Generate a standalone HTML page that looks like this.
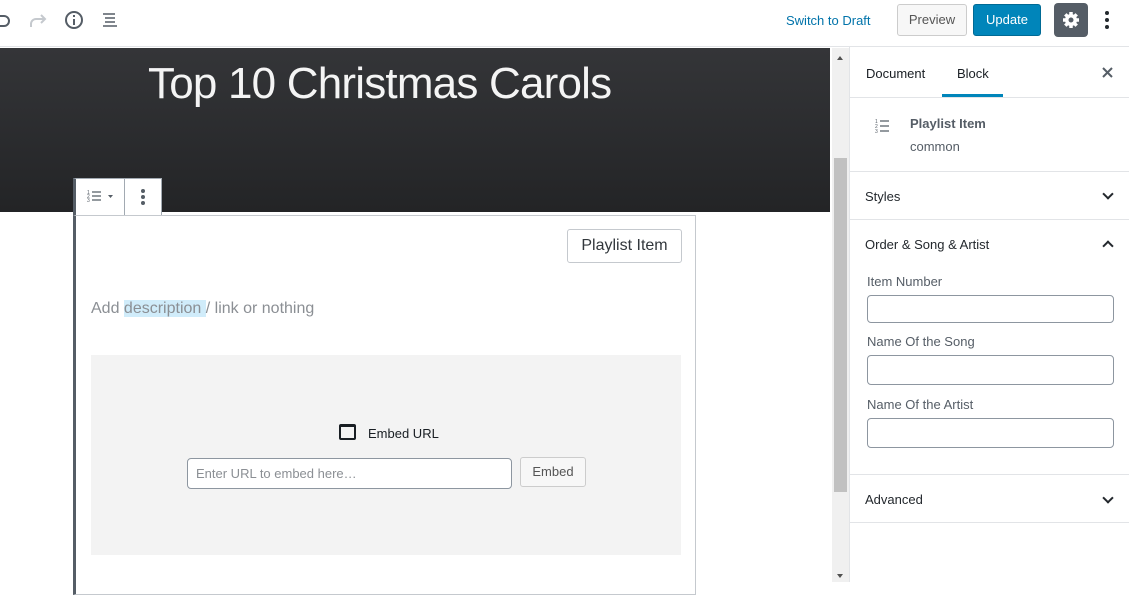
<!DOCTYPE html>
<html><head><meta charset="utf-8"><style>
*{box-sizing:border-box;margin:0;padding:0}
body{width:1129px;height:582px;overflow:hidden;background:#fff;font-family:"Liberation Sans",sans-serif;position:relative;color:#23282d}
.a{position:absolute}
.top{left:0;top:0;width:1129px;height:47px;border-bottom:1px solid #e2e4e7;background:#fff}
.btn{position:absolute;font-size:13px;border-radius:3px;text-align:center}
.side{left:849px;top:47px;width:280px;height:535px;border-left:1px solid #e2e4e7;background:#fff}
.sec{position:absolute;left:0;width:280px;border-bottom:1px solid #e2e4e7}
.lbl{position:absolute;left:17px;font-size:13px;color:#555d66}
.inp{position:absolute;left:17px;width:247px;height:28px;border:1px solid #8d96a0;border-radius:4px}
.chev{position:absolute;right:18px;width:8px;height:8px;border-right:2px solid #23282d;border-bottom:2px solid #23282d}
</style></head><body>
<div class="a top">
<svg class="a" style="left:0;top:10px" width="130" height="22" viewBox="0 0 130 22">
<path d="M0 6h4a5 5 0 0 1 0 10H0" fill="none" stroke="#555d66" stroke-width="2"/>
<path d="M44 9h-8a5 5 0 0 0-5 5v3" fill="none" stroke="#c5c9ce" stroke-width="2"/><path d="M41 5l4 4-4 4" fill="none" stroke="#c5c9ce" stroke-width="2"/>
<circle cx="74" cy="10" r="8" fill="none" stroke="#555d66" stroke-width="2"/><rect x="73" y="9" width="2" height="6" fill="#555d66"/><rect x="73" y="5" width="2" height="2" fill="#555d66"/>
<path d="M103 4h12M105 8h10M105 12h10M103 16h14" stroke="#555d66" stroke-width="1.5"/>
</svg>
<div class="a" style="left:786px;top:13px;font-size:13px;color:#0073aa">Switch to Draft</div>
<div class="btn" style="left:897px;top:4px;width:70px;height:32px;border:1px solid #ccc;background:#f7f7f7;color:#555;line-height:30px">Preview</div>
<div class="btn" style="left:973px;top:4px;width:68px;height:32px;background:#0085ba;border:1px solid #006a95;color:#fff;line-height:30px">Update</div>
<div class="btn" style="left:1054px;top:3px;width:34px;height:34px;background:#555d66;border-radius:4px"></div>
<svg class="a" style="left:1061px;top:10px" width="20" height="20" viewBox="0 0 20 20"><g fill="#fff"><circle cx="10" cy="10" r="6"/><g stroke="#fff" stroke-width="3.5"><path d="M10 2v16M2 10h16M4.3 4.3l11.4 11.4M15.7 4.3L4.3 15.7"/></g></g><circle cx="10" cy="10" r="2.5" fill="#555d66"/></svg>
<div class="a" style="left:1105px;top:11px;width:4px;height:4px;border-radius:2px;background:#23282d;box-shadow:0 7px 0 #23282d,0 14px 0 #23282d"></div>
</div>
<div class="a" style="left:0;top:48px;width:830px;height:164px;background:linear-gradient(#343538,#232426)"></div>
<div class="a" style="left:148px;top:59px;font-size:44px;color:#f4f4f4;letter-spacing:-0.8px">Top 10 Christmas Carols</div>
<div class="a" style="left:73px;top:178px;width:89px;height:37px;background:#fff;border:1px solid #a2aab2;border-left:3px solid #555d66;border-bottom:none"></div>
<div class="a" style="left:124px;top:178px;width:1px;height:37px;background:#a2aab2"></div>
<svg class="a" style="left:87px;top:188px" width="30" height="16" viewBox="0 0 30 16"><path d="M5 4h9M5 8h9M5 12h9" stroke="#555d66" stroke-width="1.2"/><text x="0" y="6" font-size="5" fill="#555d66">1</text><text x="0" y="10" font-size="5" fill="#555d66">2</text><text x="0" y="14" font-size="5" fill="#555d66">3</text><path d="M21 7h5l-2.5 3z" fill="#555d66"/></svg>
<div class="a" style="left:141px;top:189px;width:4px;height:4px;border-radius:2px;background:#555d66;box-shadow:0 6px 0 #555d66,0 12px 0 #555d66"></div>
<div class="a" style="left:73px;top:215px;width:623px;height:380px;border:1px solid #c5c9ce;border-left:3px solid #555d66"></div>
<div class="btn" style="left:567px;top:229px;width:115px;height:34px;border:1px solid #c5c9ce;font-size:16px;line-height:32px;color:#32373c">Playlist Item</div>
<div class="a" style="left:91px;top:300px;font-size:16px;color:#8b8f94">Add <span style="background:#d0ecfa">description </span>/ link or nothing</div>
<div class="a" style="left:91px;top:355px;width:590px;height:200px;background:#f3f3f3"></div>
<div class="a" style="left:339px;top:424px;width:17px;height:16px;border:2px solid #191e23;border-top-width:3px;border-radius:2px"></div>
<div class="a" style="left:368px;top:426px;font-size:13px;color:#191e23">Embed URL</div>
<div class="a" style="left:187px;top:458px;width:325px;height:31px;border:1px solid #8d96a0;border-radius:4px;background:#fff;font-size:13px;color:#8b8f94;padding:7px 8px">Enter URL to embed here…</div>
<div class="btn" style="left:520px;top:457px;width:66px;height:30px;border:1px solid #ccc;background:#f7f7f7;color:#555;line-height:28px">Embed</div>
<div class="a" style="left:832px;top:48px;width:17px;height:534px;background:#f0f0f0"></div>
<div class="a" style="left:834px;top:158px;width:13px;height:334px;background:#c1c1c1"></div>
<div class="a" style="left:837px;top:56px;border:3.5px solid transparent;border-bottom:4px solid #505050;border-top:none"></div>
<div class="a" style="left:837px;top:574px;border:3.5px solid transparent;border-top:4px solid #505050;border-bottom:none"></div>
<div class="a side">
<div class="sec" style="top:0;height:51px">
<div class="a" style="left:16px;top:19px;font-size:13px;color:#191e23">Document</div>
<div class="a" style="left:107px;top:19px;font-size:13px;color:#191e23">Block</div>
<div class="a" style="left:92px;top:47px;width:61px;height:3px;background:#0085ba"></div>
<svg class="a" style="left:252px;top:20px" width="11" height="11" viewBox="0 0 11 11"><path d="M1 1l9 9M10 1l-9 9" stroke="#555d66" stroke-width="2"/></svg>
</div>
<div class="sec" style="top:51px;height:74px">
<svg class="a" style="left:25px;top:20px" width="16" height="16" viewBox="0 0 16 16"><path d="M5 3h9M5 8h9M5 13h9" stroke="#555d66" stroke-width="1.2"/><text x="0" y="5" font-size="5" fill="#555d66">1</text><text x="0" y="10" font-size="5" fill="#555d66">2</text><text x="0" y="15" font-size="5" fill="#555d66">3</text></svg>
<div class="a" style="left:60px;top:18px;font-size:13px;color:#555d66;font-weight:bold">Playlist Item</div>
<div class="a" style="left:60px;top:41px;font-size:13px;color:#555d66">common</div>
</div>
<div class="sec" style="top:125px;height:48px">
<div class="a" style="left:15px;top:17px;font-size:13px">Styles</div>
<div class="chev" style="top:18px;transform:rotate(45deg)"></div>
</div>
<div class="sec" style="top:173px;height:255px">
<div class="a" style="left:15px;top:17px;font-size:13px">Order &amp; Song &amp; Artist</div>
<div class="chev" style="top:22px;transform:rotate(-135deg)"></div>
<div class="lbl" style="top:54px">Item Number</div>
<div class="inp" style="top:75px"></div>
<div class="lbl" style="top:114px">Name Of the Song</div>
<div class="inp" style="top:135px;height:30px"></div>
<div class="lbl" style="top:177px">Name Of the Artist</div>
<div class="inp" style="top:198px;height:30px"></div>
</div>
<div class="sec" style="top:428px;height:48px">
<div class="a" style="left:15px;top:17px;font-size:13px">Advanced</div>
<div class="chev" style="top:19px;transform:rotate(45deg)"></div>
</div>
</div>
</body></html>
